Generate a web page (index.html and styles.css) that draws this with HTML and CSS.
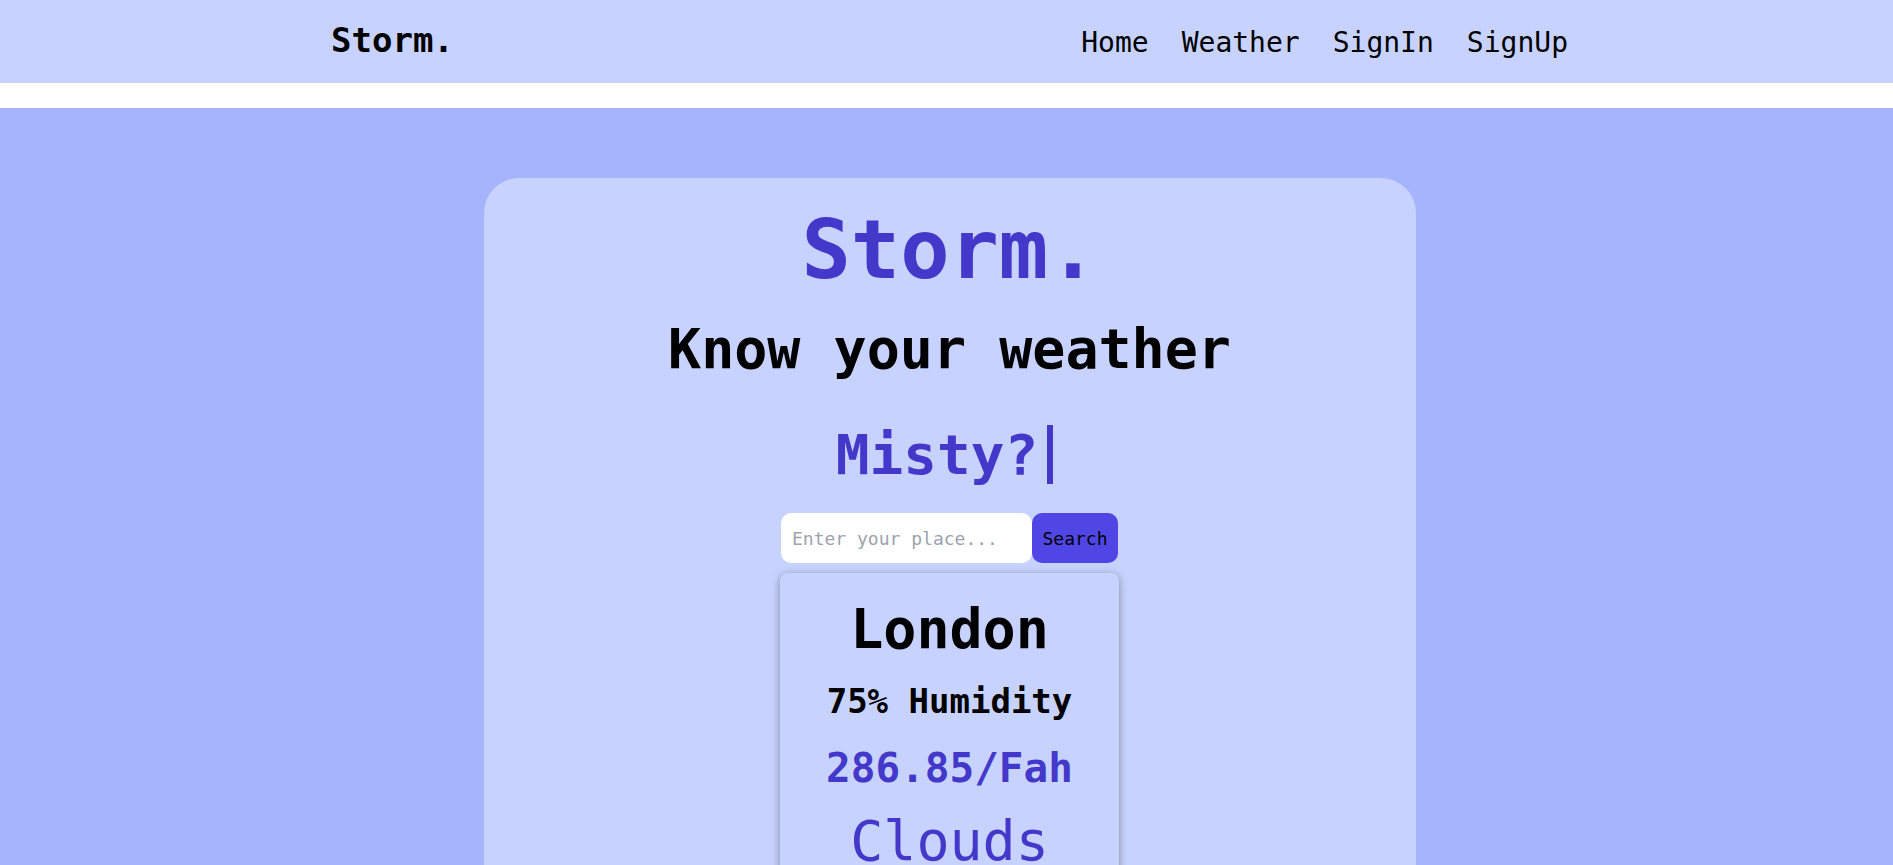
FILE: index.html
```html
<!DOCTYPE html>
<html lang="en">
<head>
<meta charset="utf-8">
<title>Storm.</title>
<link rel="stylesheet" href="styles.css">
</head>
<body>
  <header class="navbar">
    <div class="nav-inner">
      <a class="brand" href="#">Storm.</a>
      <nav class="nav-links">
        <a href="#">Home</a>
        <a href="#">Weather</a>
        <a href="#">SignIn</a>
        <a href="#">SignUp</a>
      </nav>
    </div>
  </header>
  <main class="main">
    <section class="hero">
      <h1 class="hero-title">Storm.</h1>
      <h2 class="hero-sub">Know your weather</h2>
      <div class="typer"><span class="typer-text">Misty?</span><span class="cursor"></span></div>
      <form class="search">
        <input class="search-input" type="text" placeholder="Enter your place...">
        <button class="search-btn" type="button">Search</button>
      </form>
      <div class="weather-card">
        <div class="city">London</div>
        <div class="humidity">75% Humidity</div>
        <div class="temp">286.85/Fah</div>
        <div class="cond">Clouds</div>
      </div>
    </section>
  </main>
</body>
</html>
```
FILE: styles.css
```css
* { box-sizing: border-box; }
html, body { margin: 0; padding: 0; }
body {
  background: #ffffff;
  font-family: "DejaVu Sans Mono", "Liberation Mono", monospace;
  color: #000;
  height: 865px;
  overflow: hidden;
  padding-left: 6px;
}
a { color: inherit; text-decoration: none; }

.navbar {
  background: #c7d2fe;
  height: 83px;
  margin-left: -6px;
  padding-left: 6px;
}
.nav-inner {
  width: 1237px;
  margin: 0 auto;
  height: 83px;
  padding-top: 23px;
  display: flex;
  align-items: baseline;
  justify-content: space-between;
}
.brand {
  font-size: 34px;
  font-weight: bold;
  line-height: 1;
}
.nav-links {
  display: flex;
  align-items: baseline;
  gap: 33px;
}
.nav-links a {
  font-size: 28px;
  line-height: 1;
}

.main {
  background: #a5b4fc;
  margin-top: 25px;
  margin-left: -6px;
  padding-left: 6px;
  padding-top: 70px;
  height: 800px;
}
.hero {
  width: 932px;
  margin: 0 auto;
  background: #c7d2fe;
  border-radius: 35px;
  padding-top: 31px;
  min-height: 760px;
  display: flex;
  flex-direction: column;
  align-items: center;
}
.hero-title {
  margin: 0;
  font-size: 82px;
  line-height: 1;
  font-weight: bold;
  color: #4338ca;
}
.hero-sub {
  margin: 31px 0 0;
  font-size: 55px;
  line-height: 1;
  font-weight: bold;
}
.typer {
  margin: 48px 10px 0 0;
  height: 59px;
  display: flex;
  align-items: center;
  color: #4338ca;
}
.typer-text {
  font-size: 56px;
  line-height: 1;
  font-weight: bold;
}
.cursor {
  width: 6px;
  height: 59px;
  background: #4338ca;
  margin-left: 9px;
}
.search {
  margin: 29px 0 0;
  display: flex;
  height: 50px;
}
.search-input {
  width: 251px;
  height: 50px;
  border: none;
  border-radius: 10px;
  background: #fff;
  padding: 0 11px;
  font-family: inherit;
  font-size: 18px;
  outline: none;
}
.search-input::placeholder { color: #9ca3af; }
.search-btn {
  width: 86px;
  height: 50px;
  border: none;
  border-radius: 10px;
  background: #4f46e5;
  color: #000;
  font-family: inherit;
  font-size: 18px;
  padding: 0;
}
.weather-card {
  margin-top: 10px;
  width: 339px;
  min-height: 320px;
  background: #c7d2fe;
  border-radius: 8px;
  box-shadow: 0 2px 8px rgba(0, 0, 0, 0.35);
  padding-top: 29px;
  display: flex;
  flex-direction: column;
  align-items: center;
}
.city {
  font-size: 55px;
  line-height: 1;
  font-weight: bold;
}
.humidity {
  margin-top: 27px;
  font-size: 34px;
  line-height: 1;
  font-weight: bold;
}
.temp {
  margin-top: 30px;
  font-size: 41px;
  line-height: 1;
  font-weight: bold;
  color: #4338ca;
}
.cond {
  margin-top: 25px;
  font-size: 55px;
  line-height: 1;
  color: #4338ca;
}
```
